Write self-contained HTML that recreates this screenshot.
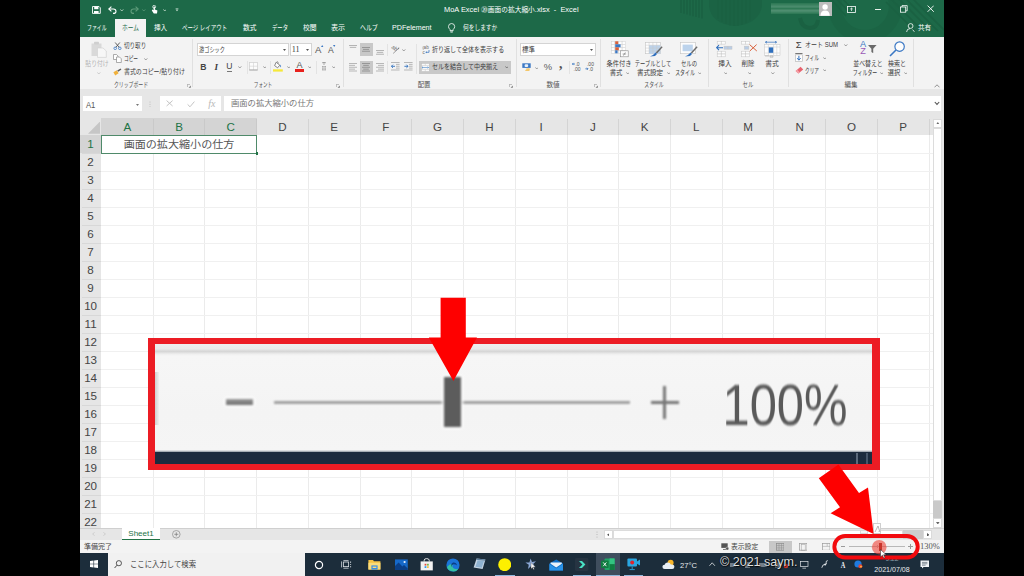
<!DOCTYPE html>
<html lang="ja"><head><meta charset="utf-8"><title>MoA Excel</title>
<style>
*{box-sizing:border-box;margin:0;padding:0}
html,body{width:1024px;height:576px;overflow:hidden;background:#000}
body{font-family:"Liberation Sans","Noto Sans CJK JP",sans-serif;position:relative}
#pg{position:absolute;left:0;top:0;width:1024px;height:576px;overflow:hidden;background:#fff}
.a{position:absolute;display:block}
.t{position:absolute;white-space:nowrap;line-height:1.2}
</style></head><body><div id="pg">
<div class="a" style="left:80.0px;top:0.0px;width:864.0px;height:37.0px;background:#1d6948;"></div>
<svg class="a" style="left:680.0px;top:0.0px;" width="264" height="37" viewBox="0 0 264 37"><g stroke="#1a6142" stroke-width="1.5"><path d="M1 0 V13.0"/><path d="M4 0 V13.8"/><path d="M7 0 V14.6"/><path d="M10 0 V15.4"/><path d="M13 0 V16.2"/><path d="M16 0 V17.0"/><path d="M19 0 V17.8"/><path d="M22 0 V18.6"/></g><path d="M29 0 V6 Q31 24 55 26 Q79 24 82 6 V0 Z" fill="#1b6344"/><g stroke="#1a6142" stroke-width="1.4"><path d="M38 0 V18.8"/><path d="M42 0 V21.8"/><path d="M46 0 V24.0"/><path d="M50 0 V25.4"/><path d="M54 0 V26.0"/><path d="M58 0 V25.8"/><path d="M62 0 V24.8"/><path d="M66 0 V23.0"/><path d="M70 0 V20.4"/></g><path d="M120 18 Q122 28 130 28 Q137 28 138 20" fill="none" stroke="#1a6142" stroke-width="4"/><circle cx="185" cy="6" r="30.4" fill="none" stroke="#1b6444" stroke-width="13"/><g stroke="#1a6142" stroke-width="1.5"><path d="M150 -2 L166 16 M155 -3 L170 13 M160 -4 L173 10"/></g><g stroke="#1a6142" stroke-width="1.6"><path d="M206 2 L236 32 M211 -1 L243 31 M217 -3 L251 31 M223 -4 L258 31 M230 -4 L264 30"/></g></svg>
<svg class="a" style="left:91.6px;top:5.6px;" width="9" height="8" viewBox="0 0 9 8"><path d="M0.5 0.5 H7 L8.3 1.8 V7.4 H0.5 Z" fill="none" stroke="#fff" stroke-width="0.9"/><rect x="2.2" y="0.6" width="4.2" height="2.6" fill="#fff"/><rect x="2" y="5" width="4.6" height="2.4" fill="#fff"/></svg>
<svg class="a" style="left:108.0px;top:5.8px;" width="9" height="8" viewBox="0 0 9 8"><path d="M1 3 H5.4 Q8 3 8 5.4 Q8 7.4 5 7.4" fill="none" stroke="#fff" stroke-width="1.1"/><path d="M3.4 0.6 L0.8 3 L3.4 5.4" fill="none" stroke="#fff" stroke-width="1.1"/></svg>
<svg class="a" style="left:120.2px;top:8.5px;" width="3.6" height="2.6" viewBox="0 0 3.6 2.6"><path d="M0.3 0.4 L1.8 2 L3.3 0.4" fill="none" stroke="#cfe3d6" stroke-width="0.8"/></svg>
<svg class="a" style="left:129.6px;top:5.8px;" width="9" height="8" viewBox="0 0 9 8"><path d="M8 3 H3.6 Q1 3 1 5.4 Q1 7.4 4 7.4" fill="none" stroke="#5f9c7b" stroke-width="1.1"/><path d="M5.6 0.6 L8.2 3 L5.6 5.4" fill="none" stroke="#5f9c7b" stroke-width="1.1"/></svg>
<svg class="a" style="left:142.4px;top:8.5px;" width="3.6" height="2.6" viewBox="0 0 3.6 2.6"><path d="M0.3 0.4 L1.8 2 L3.3 0.4" fill="none" stroke="#5f9c7b" stroke-width="0.8"/></svg>
<svg class="a" style="left:150.6px;top:5.0px;" width="7" height="9" viewBox="0 0 7 9"><circle cx="3.2" cy="1.8" r="1.5" fill="none" stroke="#fff" stroke-width="0.7"/><path d="M2.6 1.6 V5.2 L1.4 4.6 L0.8 5.4 L2.8 8.4 H6 L6.4 5.4 L3.9 4.4 V1.6 Z" fill="#fff"/></svg>
<svg class="a" style="left:162.5px;top:8.5px;" width="3.6" height="2.6" viewBox="0 0 3.6 2.6"><path d="M0.3 0.4 L1.8 2 L3.3 0.4" fill="none" stroke="#cfe3d6" stroke-width="0.8"/></svg>
<svg class="a" style="left:175.0px;top:8.4px;" width="4" height="4" viewBox="0 0 4 4"><path d="M0.6 0.4 H3.4" stroke="#cfe3d6" stroke-width="0.6"/><path d="M0.5 1.6 L2 3.2 L3.5 1.6 Z" fill="#cfe3d6"/></svg>
<div class="t" style="left:444.1px;top:10.4px;font-size:7.4px;color:#fff;transform-origin:0 50%;transform:translateY(-50%) scaleX(1.004);">MoA Excel <span style="font-size:6.7px">⑳画面の拡大縮小</span>.xlsx&nbsp; -&nbsp; Excel</div>
<div class="a" style="left:115.0px;top:19.4px;width:31.0px;height:18.6px;background:#f3f3f3;"></div>
<div class="t" style="left:87.4px;top:28.0px;font-size:7.4px;color:#fff;transform-origin:0 50%;transform:translateY(-50%) scaleX(0.663);">ファイル</div>
<div class="t" style="left:122.2px;top:28.0px;font-size:7.4px;color:#1d6948;transform-origin:0 50%;transform:translateY(-50%) scaleX(0.774);">ホーム</div>
<div class="t" style="left:154.0px;top:28.0px;font-size:7.4px;color:#fff;transform-origin:0 50%;transform:translateY(-50%) scaleX(0.892);">挿入</div>
<div class="t" style="left:182.4px;top:28.0px;font-size:7.4px;color:#fff;transform-origin:0 50%;transform:translateY(-50%) scaleX(0.741);">ページ レイアウト</div>
<div class="t" style="left:243.3px;top:28.0px;font-size:7.4px;color:#fff;transform-origin:0 50%;transform:translateY(-50%) scaleX(0.912);">数式</div>
<div class="t" style="left:272.0px;top:28.0px;font-size:7.4px;color:#fff;transform-origin:0 50%;transform:translateY(-50%) scaleX(0.721);">データ</div>
<div class="t" style="left:302.7px;top:28.0px;font-size:7.4px;color:#fff;transform-origin:0 50%;transform:translateY(-50%) scaleX(0.919);">校閲</div>
<div class="t" style="left:331.0px;top:28.0px;font-size:7.4px;color:#fff;transform-origin:0 50%;transform:translateY(-50%) scaleX(0.960);">表示</div>
<div class="t" style="left:359.7px;top:28.0px;font-size:7.4px;color:#fff;transform-origin:0 50%;transform:translateY(-50%) scaleX(0.802);">ヘルプ</div>
<div class="t" style="left:392.0px;top:28.0px;font-size:7.4px;color:#fff;transform-origin:0 50%;transform:translateY(-50%) scaleX(0.962);">PDFelement</div>
<svg class="a" style="left:448.4px;top:22.6px;" width="7.2" height="10.6" viewBox="0 0 7.2 10.6"><path d="M3.6 0.5 Q6.7 0.6 6.7 3.6 Q6.7 5.2 5.2 6.4 V7.6 H2 V6.4 Q0.5 5.2 0.5 3.6 Q0.5 0.6 3.6 0.5 Z" fill="none" stroke="#fff" stroke-width="0.8"/><path d="M2.2 8.8 H5 M2.6 10 H4.6" stroke="#fff" stroke-width="0.7"/></svg>
<div class="t" style="left:462.5px;top:28.0px;font-size:7.4px;color:#fff;transform-origin:0 50%;transform:translateY(-50%) scaleX(0.773);">何をしますか</div>
<svg class="a" style="left:906.0px;top:23.4px;" width="9" height="9.4" viewBox="0 0 9 9.4"><circle cx="4.6" cy="3" r="2.4" fill="none" stroke="#fff" stroke-width="0.8"/><path d="M0.6 9 Q0.8 5.6 4 5.6 M6.6 6.6 L8.4 8.8" fill="none" stroke="#fff" stroke-width="0.8"/></svg>
<div class="t" style="left:918.4px;top:28.0px;font-size:7.4px;color:#fff;transform-origin:0 50%;transform:translateY(-50%) scaleX(0.892);">共有</div>
<div class="a" style="left:770.6px;top:3.0px;width:49.4px;height:11.4px;background:linear-gradient(180deg,#3e8a61 0%,#8fbfa5 35%,#4b926b 50%,#9cc7b0 70%,#3e8a61 100%);filter:blur(0.6px);opacity:0.42"></div>
<div class="a" style="left:819.4px;top:2.0px;width:12.2px;height:13.8px;background:#bcbcbc;"></div>
<svg class="a" style="left:819.4px;top:2.0px;" width="12.2" height="13.8" viewBox="0 0 12.2 13.8"><circle cx="6.1" cy="5" r="2.7" fill="#fff"/><path d="M1.4 13.8 Q1.6 8.4 6.1 8.4 Q10.6 8.4 10.8 13.8 Z" fill="#fff"/></svg>
<svg class="a" style="left:846.6px;top:5.6px;" width="9" height="7" viewBox="0 0 9 7"><rect x="0.5" y="0.5" width="8" height="6" fill="none" stroke="#fff" stroke-width="0.8"/><path d="M4.5 2 V5 M3.2 3.2 L4.5 2 L5.8 3.2" stroke="#fff" stroke-width="0.7" fill="none"/></svg>
<div class="a" style="left:875.0px;top:8.7px;width:6.0px;height:0.7px;background:#e8f0ea;"></div>
<svg class="a" style="left:900.0px;top:5.2px;" width="8" height="8" viewBox="0 0 8 8"><rect x="0.5" y="2" width="5.2" height="5.2" fill="none" stroke="#fff" stroke-width="0.8"/><path d="M2 2 V0.6 H7.2 V5.8 H5.8" fill="none" stroke="#fff" stroke-width="0.8"/></svg>
<svg class="a" style="left:926.6px;top:5.4px;" width="7.4" height="7.4" viewBox="0 0 7.4 7.4"><path d="M0.6 0.6 L6.8 6.8 M6.8 0.6 L0.6 6.8" stroke="#fff" stroke-width="0.9"/></svg>
<div class="a" style="left:80.0px;top:37.0px;width:864.0px;height:52.0px;background:#f3f3f3;"></div>
<svg class="a" style="left:91.0px;top:41.0px;" width="16" height="17" viewBox="0 0 16 17"><rect x="0.5" y="2.5" width="10" height="12.5" fill="#d9d9d9"/><rect x="3" y="0.8" width="5" height="2.6" rx="0.8" fill="#cfcfcf"/><path d="M6.5 7 H12 L15.3 10 V16.4 H6.5 Z" fill="#f7f7f7" stroke="#d2d2d2" stroke-width="0.7"/></svg>
<div class="t" style="left:97.3px;top:64.3px;font-size:7px;color:#b4b4b4;transform:translate(-50%,-50%) scaleX(0.832);">貼り付け</div>
<svg class="a" style="left:97.0px;top:71.5px;" width="3.6" height="2.6" viewBox="0 0 3.6 2.6"><path d="M0.3 0.4 L1.8 2 L3.3 0.4" fill="none" stroke="#c0c0c0" stroke-width="0.8"/></svg>
<svg class="a" style="left:112.5px;top:41.5px;" width="9" height="8" viewBox="0 0 9 8"><path d="M2.2 0.5 L6.2 5.4 M6.8 0.5 L2.8 5.4" stroke="#555" stroke-width="0.9" fill="none"/><circle cx="2.2" cy="6.3" r="1.3" fill="none" stroke="#3b78c4" stroke-width="0.8"/><circle cx="6.8" cy="6.3" r="1.3" fill="none" stroke="#3b78c4" stroke-width="0.8"/></svg>
<div class="t" style="left:123.8px;top:45.6px;font-size:7px;color:#3c3c3c;transform-origin:0 50%;transform:translateY(-50%) scaleX(0.793);">切り取り</div>
<svg class="a" style="left:113.0px;top:54.0px;" width="9" height="9" viewBox="0 0 9 9"><path d="M0.5 0.5 H3.5 L5 2 V5.5 H0.5 Z" fill="#fff" stroke="#8a8a8a" stroke-width="0.7"/><path d="M3.5 3 H6.5 L8.3 4.8 V8.5 H3.5 Z" fill="#fff" stroke="#8a8a8a" stroke-width="0.7"/></svg>
<div class="t" style="left:123.8px;top:59.0px;font-size:7px;color:#3c3c3c;transform-origin:0 50%;transform:translateY(-50%) scaleX(0.667);">コピー</div>
<svg class="a" style="left:144.2px;top:57.7px;" width="3.6" height="2.6" viewBox="0 0 3.6 2.6"><path d="M0.3 0.4 L1.8 2 L3.3 0.4" fill="none" stroke="#858585" stroke-width="0.8"/></svg>
<svg class="a" style="left:113.0px;top:67.5px;" width="9" height="8" viewBox="0 0 9 8"><path d="M0.4 4.2 L3.8 2.2 L5.6 5.2 L2.2 7.4 Z" fill="#f0b13c"/><path d="M4.2 2.6 L7.6 0.4 L8.4 1.4 L5.2 3.8 Z" fill="#5a5a5a"/></svg>
<div class="t" style="left:123.8px;top:72.3px;font-size:7px;color:#3c3c3c;transform-origin:0 50%;transform:translateY(-50%) scaleX(0.846);">書式のコピー/貼り付け</div>
<div class="t" style="left:131.4px;top:85.0px;font-size:7px;color:#555;transform:translate(-50%,-50%) scaleX(0.698);">クリップボード</div>
<svg class="a" style="left:186.5px;top:83.5px;" width="4" height="4" viewBox="0 0 4 4"><path d="M0.3 3 V0.3 H3" fill="none" stroke="#888" stroke-width="0.6"/><path d="M1.6 3.8 H3.8 V1.6 Z" fill="#777"/></svg>
<div class="a" style="left:192.4px;top:39.0px;width:1.0px;height:48.0px;background:#e0e0e0;"></div>
<div class="a" style="left:197.4px;top:43.0px;width:91.4px;height:13.3px;background:#fff;border:1px solid #d4d4d4;"></div>
<div class="t" style="left:199.0px;top:49.8px;font-size:7px;color:#3c3c3c;transform-origin:0 50%;transform:translateY(-50%) scaleX(0.743);">游ゴシック</div>
<svg class="a" style="left:283.1px;top:48.8px;" width="3" height="2" viewBox="0 0 3 2"><path d="M0 0 L3 0 L1.5 2 Z" fill="#555"/></svg>
<div class="a" style="left:290.0px;top:43.0px;width:21.5px;height:13.3px;background:#fff;border:1px solid #d4d4d4;"></div>
<div class="t" style="left:291.8px;top:49.8px;font-size:8.2px;color:#3c3c3c;transform-origin:0 50%;transform:translateY(-50%);font-family:'Liberation Serif',serif;">11</div>
<svg class="a" style="left:306.3px;top:48.8px;" width="3" height="2" viewBox="0 0 3 2"><path d="M0 0 L3 0 L1.5 2 Z" fill="#555"/></svg>
<div class="t" style="left:318.2px;top:50.0px;font-size:9.6px;color:#555;transform:translate(-50%,-50%);">A</div>
<svg class="a" style="left:321.4px;top:44.6px;" width="2.4" height="2" viewBox="0 0 3 2.4"><path d="M0 2.4 L1.5 0 L3 2.4 Z" fill="#3b78c4"/></svg>
<div class="t" style="left:330.8px;top:50.4px;font-size:8.6px;color:#555;transform:translate(-50%,-50%);">A</div>
<svg class="a" style="left:333.4px;top:44.6px;" width="2.4" height="2" viewBox="0 0 3 2.4"><path d="M0 0 L1.5 2.4 L3 0 Z" fill="#3b78c4"/></svg>
<div class="t" style="left:203.3px;top:66.6px;font-size:8.6px;color:#444;transform:translate(-50%,-50%);font-weight:bold;">B</div>
<div class="t" style="left:216.3px;top:66.6px;font-size:9px;color:#3c3c3c;transform:translate(-50%,-50%);font-style:italic;font-weight:bold;font-family:'Liberation Serif',serif;">I</div>
<div class="t" style="left:229.4px;top:66.3px;font-size:8.6px;color:#444;transform:translate(-50%,-50%);">U</div>
<div class="a" style="left:226.8px;top:70.5px;width:5.2px;height:0.6px;background:#777;"></div>
<svg class="a" style="left:238.2px;top:66.2px;" width="3.6" height="2.6" viewBox="0 0 3.6 2.6"><path d="M0.3 0.4 L1.8 2 L3.3 0.4" fill="none" stroke="#858585" stroke-width="0.8"/></svg>
<div class="a" style="left:246.5px;top:61.0px;width:1.0px;height:13.0px;background:#e3e3e3;"></div>
<svg class="a" style="left:249.4px;top:62.4px;" width="9" height="8.4" viewBox="0 0 9 8.4"><rect x="0.4" y="0.4" width="8.2" height="7.6" fill="#fcfcfc" stroke="#cfcfcf" stroke-width="0.7"/><path d="M4.5 0.4 V8 M0.4 4.2 H8.6" stroke="#d2d2d2" stroke-width="0.6"/><path d="M0.4 8 H8.6" stroke="#9a9a9a" stroke-width="0.8"/></svg>
<svg class="a" style="left:262.5px;top:66.2px;" width="3.6" height="2.6" viewBox="0 0 3.6 2.6"><path d="M0.3 0.4 L1.8 2 L3.3 0.4" fill="none" stroke="#858585" stroke-width="0.8"/></svg>
<div class="a" style="left:270.2px;top:61.0px;width:1.0px;height:13.0px;background:#e3e3e3;"></div>
<svg class="a" style="left:273.0px;top:61.0px;" width="10" height="11" viewBox="0 0 10 11"><path d="M3.2 1.2 L6.8 4.2 L4.6 6.8 L1.6 4.6 Z" fill="#fdfdfd" stroke="#6a6a6a" stroke-width="0.8"/><path d="M7.2 3.6 Q8.8 5.2 7.8 6.6 Q6.8 5.4 7.2 3.6 Z" fill="#3b78c4"/><path d="M3.8 0.3 Q5.6 0.6 5.2 2.6" fill="none" stroke="#6a6a6a" stroke-width="0.6"/><rect x="0" y="8.3" width="9.8" height="2.3" fill="#f5e83a"/></svg>
<svg class="a" style="left:286.6px;top:66.2px;" width="3.6" height="2.6" viewBox="0 0 3.6 2.6"><path d="M0.3 0.4 L1.8 2 L3.3 0.4" fill="none" stroke="#858585" stroke-width="0.8"/></svg>
<div class="t" style="left:299.4px;top:65.4px;font-size:9px;color:#555;transform:translate(-50%,-50%);">A</div>
<div class="a" style="left:294.7px;top:69.3px;width:9.3px;height:2.3px;background:#e8211d;"></div>
<svg class="a" style="left:307.8px;top:66.2px;" width="3.6" height="2.6" viewBox="0 0 3.6 2.6"><path d="M0.3 0.4 L1.8 2 L3.3 0.4" fill="none" stroke="#858585" stroke-width="0.8"/></svg>
<div class="a" style="left:316.0px;top:61.0px;width:1.0px;height:13.0px;background:#e3e3e3;"></div>
<svg class="a" style="left:320.8px;top:62.0px;" width="6" height="9" viewBox="0 0 6 9"><path d="M1 0.8 L3 0.4 L5 0.8 M3 0.4 V3" stroke="#777" stroke-width="0.6" fill="none"/><rect x="1" y="4" width="4" height="4.4" fill="#a8a8a8"/><path d="M1 5.4 H5 M1 6.9 H5 M3 4 V8.4" stroke="#f3f3f3" stroke-width="0.5"/></svg>
<svg class="a" style="left:331.8px;top:66.2px;" width="3.6" height="2.6" viewBox="0 0 3.6 2.6"><path d="M0.3 0.4 L1.8 2 L3.3 0.4" fill="none" stroke="#858585" stroke-width="0.8"/></svg>
<div class="t" style="left:262.6px;top:85.0px;font-size:7px;color:#555;transform:translate(-50%,-50%) scaleX(0.657);">フォント</div>
<svg class="a" style="left:336.2px;top:83.5px;" width="4" height="4" viewBox="0 0 4 4"><path d="M0.3 3 V0.3 H3" fill="none" stroke="#888" stroke-width="0.6"/><path d="M1.6 3.8 H3.8 V1.6 Z" fill="#777"/></svg>
<div class="a" style="left:342.5px;top:39.0px;width:1.0px;height:48.0px;background:#e0e0e0;"></div>
<div class="a" style="left:360.0px;top:43.0px;width:13.0px;height:13.3px;background:#c8c8c8;"></div>
<div class="a" style="left:360.0px;top:60.8px;width:13.0px;height:13.0px;background:#c8c8c8;"></div>
<svg class="a" style="left:349.3px;top:44.9px;" width="8" height="3.8" viewBox="0 0 8 3.8"><rect x="0.00" y="0.00" width="8" height="0.8" fill="#a4a4a4"/><rect x="0.80" y="1.90" width="6.4" height="0.8" fill="#a4a4a4"/></svg>
<svg class="a" style="left:362.4px;top:47.4px;" width="8" height="5.699999999999999" viewBox="0 0 8 5.699999999999999"><rect x="0.00" y="0.00" width="8" height="0.8" fill="#8a8a8a"/><rect x="0.90" y="1.90" width="6.2" height="0.8" fill="#8a8a8a"/><rect x="0.00" y="3.80" width="8" height="0.8" fill="#8a8a8a"/></svg>
<svg class="a" style="left:375.6px;top:49.6px;" width="8" height="5.699999999999999" viewBox="0 0 8 5.699999999999999"><rect x="0.00" y="0.00" width="8" height="0.8" fill="#a4a4a4"/><rect x="0.80" y="1.90" width="6.4" height="0.8" fill="#a4a4a4"/><rect x="0.00" y="3.80" width="8" height="0.8" fill="#a4a4a4"/></svg>
<svg class="a" style="left:349.3px;top:62.6px;" width="8" height="9.5" viewBox="0 0 8 9.5"><rect x="0.00" y="0.00" width="8" height="0.8" fill="#a8a8a8"/><rect x="0.00" y="1.90" width="6" height="0.8" fill="#a8a8a8"/><rect x="0.00" y="3.80" width="8" height="0.8" fill="#a8a8a8"/><rect x="0.00" y="5.70" width="6" height="0.8" fill="#a8a8a8"/><rect x="0.00" y="7.60" width="8" height="0.8" fill="#a8a8a8"/></svg>
<svg class="a" style="left:362.4px;top:62.6px;" width="8" height="9.5" viewBox="0 0 8 9.5"><rect x="0.00" y="0.00" width="8" height="0.8" fill="#8a8a8a"/><rect x="1.20" y="1.90" width="5.6" height="0.8" fill="#8a8a8a"/><rect x="0.00" y="3.80" width="8" height="0.8" fill="#8a8a8a"/><rect x="1.20" y="5.70" width="5.6" height="0.8" fill="#8a8a8a"/><rect x="0.00" y="7.60" width="8" height="0.8" fill="#8a8a8a"/></svg>
<svg class="a" style="left:375.6px;top:62.6px;" width="8" height="9.5" viewBox="0 0 8 9.5"><rect x="0.00" y="0.00" width="8" height="0.8" fill="#a8a8a8"/><rect x="2.00" y="1.90" width="6" height="0.8" fill="#a8a8a8"/><rect x="0.00" y="3.80" width="8" height="0.8" fill="#a8a8a8"/><rect x="2.00" y="5.70" width="6" height="0.8" fill="#a8a8a8"/><rect x="0.00" y="7.60" width="8" height="0.8" fill="#a8a8a8"/></svg>
<div class="a" style="left:387.3px;top:44.0px;width:1.0px;height:12.0px;background:#e3e3e3;"></div>
<div class="a" style="left:387.3px;top:61.0px;width:1.0px;height:13.0px;background:#e3e3e3;"></div>
<svg class="a" style="left:391.0px;top:45.0px;" width="9" height="9" viewBox="0 0 9 9"><text x="0" y="5.4" font-size="5.5" fill="#666" transform="rotate(38 4 4)" font-family="Liberation Sans,sans-serif">ab</text><path d="M2.2 8.4 L7.6 3.4" stroke="#777" stroke-width="0.7"/><path d="M8.3 2.6 L7.9 4.4 L6.6 3.1 Z" fill="#777"/></svg>
<svg class="a" style="left:402.2px;top:48.7px;" width="3.6" height="2.6" viewBox="0 0 3.6 2.6"><path d="M0.3 0.4 L1.8 2 L3.3 0.4" fill="none" stroke="#858585" stroke-width="0.8"/></svg>
<svg class="a" style="left:390.8px;top:62.4px;" width="9" height="8.6" viewBox="0 0 9 8.6"><rect x="0" y="0" width="8.6" height="0.8" fill="#a8a8a8"/><rect x="5" y="1.9" width="3.6" height="0.8" fill="#a8a8a8"/><rect x="5" y="3.8" width="3.6" height="0.8" fill="#a8a8a8"/><rect x="5" y="5.7" width="3.6" height="0.8" fill="#a8a8a8"/><rect x="0" y="7.6" width="8.6" height="0.8" fill="#a8a8a8"/><path d="M4 4.3 H0.4 M2 2.7 L0.4 4.3 L2 5.9" stroke="#2f6fbd" stroke-width="0.9" fill="none"/></svg>
<svg class="a" style="left:403.8px;top:62.4px;" width="9" height="8.6" viewBox="0 0 9 8.6"><rect x="0" y="0" width="8.6" height="0.8" fill="#a8a8a8"/><rect x="5" y="1.9" width="3.6" height="0.8" fill="#a8a8a8"/><rect x="5" y="3.8" width="3.6" height="0.8" fill="#a8a8a8"/><rect x="5" y="5.7" width="3.6" height="0.8" fill="#a8a8a8"/><rect x="0" y="7.6" width="8.6" height="0.8" fill="#a8a8a8"/><path d="M0.4 4.3 H4 M2.4 2.7 L4 4.3 L2.4 5.9" stroke="#2f6fbd" stroke-width="0.9" fill="none"/></svg>
<div class="a" style="left:416.2px;top:44.0px;width:1.0px;height:30.0px;background:#e3e3e3;"></div>
<svg class="a" style="left:421.8px;top:45.0px;" width="8" height="9.5" viewBox="0 0 8 9.5"><text x="1.6" y="3.8" font-size="4.6" fill="#666" font-family="Liberation Sans,sans-serif">ab</text><path d="M1.4 1 Q0.2 3 1.4 5" stroke="#888" stroke-width="0.5" fill="none"/><text x="0.6" y="8.6" font-size="4.6" fill="#666" font-family="Liberation Sans,sans-serif">c</text><path d="M7 5 V7.3 H4" stroke="#2f6fbd" stroke-width="0.7" fill="none"/><path d="M4.6 6.3 L3.4 7.3 L4.6 8.3 Z" fill="#2f6fbd"/></svg>
<div class="t" style="left:431.8px;top:49.9px;font-size:7.2px;color:#3c3c3c;transform-origin:0 50%;transform:translateY(-50%) scaleX(0.839);">折り返して全体を表示する</div>
<div class="a" style="left:419.0px;top:60.8px;width:92.3px;height:13.0px;background:#c8c8c8;"></div>
<svg class="a" style="left:421.0px;top:62.8px;" width="8.6" height="9" viewBox="0 0 8.6 9"><rect x="0.3" y="0.3" width="8" height="8.4" fill="#fafafa" stroke="#bdbdbd" stroke-width="0.6"/><path d="M0.3 2.6 H8.3 M0.3 6.4 H8.3 M4.3 0.3 V2.6 M4.3 6.4 V8.7" stroke="#c4c4c4" stroke-width="0.5"/><path d="M1 4.5 H7.6 M2 3.6 L1 4.5 L2 5.4 M6.6 3.6 L7.6 4.5 L6.6 5.4" stroke="#4a86c8" stroke-width="0.6" fill="none"/></svg>
<div class="t" style="left:431.8px;top:67.4px;font-size:7.2px;color:#3c3c3c;transform-origin:0 50%;transform:translateY(-50%) scaleX(0.839);">セルを結合して中央揃え</div>
<svg class="a" style="left:504.7px;top:66.3px;" width="3.6" height="2.6" viewBox="0 0 3.6 2.6"><path d="M0.3 0.4 L1.8 2 L3.3 0.4" fill="none" stroke="#666" stroke-width="0.8"/></svg>
<div class="t" style="left:424.2px;top:85.0px;font-size:7px;color:#555;transform:translate(-50%,-50%) scaleX(0.907);">配置</div>
<svg class="a" style="left:509.3px;top:83.5px;" width="4" height="4" viewBox="0 0 4 4"><path d="M0.3 3 V0.3 H3" fill="none" stroke="#888" stroke-width="0.6"/><path d="M1.6 3.8 H3.8 V1.6 Z" fill="#777"/></svg>
<div class="a" style="left:515.6px;top:39.0px;width:1.0px;height:48.0px;background:#e0e0e0;"></div>
<div class="a" style="left:520.4px;top:43.0px;width:75.3px;height:13.3px;background:#fff;border:1px solid #d4d4d4;"></div>
<div class="t" style="left:522.2px;top:49.8px;font-size:7px;color:#3c3c3c;transform-origin:0 50%;transform:translateY(-50%) scaleX(0.914);">標準</div>
<svg class="a" style="left:589.8px;top:48.8px;" width="3" height="2" viewBox="0 0 3 2"><path d="M0 0 L3 0 L1.5 2 Z" fill="#555"/></svg>
<svg class="a" style="left:521.7px;top:62.6px;" width="10" height="8.6" viewBox="0 0 10 8.6"><rect x="0.3" y="0.3" width="8.4" height="4.6" fill="#3b78c4"/><rect x="2.6" y="1.3" width="3.6" height="2.6" rx="1" fill="#e8f0fa"/><ellipse cx="6" cy="6.1" rx="2.2" ry="0.9" fill="#f4c76a"/><ellipse cx="5.4" cy="7.5" rx="2.2" ry="0.9" fill="#f4c76a"/></svg>
<svg class="a" style="left:534.9px;top:66.5px;" width="3.6" height="2.6" viewBox="0 0 3.6 2.6"><path d="M0.3 0.4 L1.8 2 L3.3 0.4" fill="none" stroke="#858585" stroke-width="0.8"/></svg>
<div class="t" style="left:547.9px;top:67.2px;font-size:9.4px;color:#5a5a5a;transform:translate(-50%,-50%);">%</div>
<div class="t" style="left:560.8px;top:64.4px;font-size:14px;color:#555;transform:translate(-50%,-50%);font-weight:bold;font-family:'Liberation Serif',serif;">,</div>
<div class="a" style="left:568.7px;top:61.0px;width:1.0px;height:13.0px;background:#e3e3e3;"></div>
<svg class="a" style="left:572.0px;top:62.2px;" width="9.4" height="9" viewBox="0 0 9.4 9"><path d="M3 2 H0.4 M1.5 0.9 L0.4 2 L1.5 3.1" stroke="#2f6fbd" stroke-width="0.8" fill="none"/><text x="3.4" y="3.8" font-size="5" fill="#555" font-family="Liberation Sans,sans-serif">.0</text><text x="1.6" y="8.6" font-size="5" fill="#555" font-family="Liberation Sans,sans-serif">.00</text></svg>
<svg class="a" style="left:585.3px;top:62.2px;" width="9.4" height="9" viewBox="0 0 9.4 9"><text x="2" y="3.8" font-size="5" fill="#555" font-family="Liberation Sans,sans-serif">.00</text><path d="M0.4 6.8 H3 M1.9 5.7 L3 6.8 L1.9 7.9" stroke="#2f6fbd" stroke-width="0.8" fill="none"/><text x="4" y="8.6" font-size="5" fill="#555" font-family="Liberation Sans,sans-serif">.0</text></svg>
<div class="t" style="left:553.2px;top:85.0px;font-size:7px;color:#555;transform:translate(-50%,-50%) scaleX(0.943);">数値</div>
<svg class="a" style="left:594.0px;top:83.5px;" width="4" height="4" viewBox="0 0 4 4"><path d="M0.3 3 V0.3 H3" fill="none" stroke="#888" stroke-width="0.6"/><path d="M1.6 3.8 H3.8 V1.6 Z" fill="#777"/></svg>
<div class="a" style="left:600.4px;top:39.0px;width:1.0px;height:48.0px;background:#e0e0e0;"></div>
<svg class="a" style="left:611.2px;top:41.0px;" width="18" height="16.5" viewBox="0 0 18 16.5"><rect x="0.3" y="0.3" width="3.6" height="3" fill="#fdfdfd" stroke="#cfcfcf" stroke-width="0.5"/><rect x="3.9" y="0.3" width="3.6" height="3" fill="#fdfdfd" stroke="#cfcfcf" stroke-width="0.5"/><rect x="7.5" y="0.3" width="3.6" height="3" fill="#fdfdfd" stroke="#cfcfcf" stroke-width="0.5"/><rect x="11.1" y="0.3" width="3.6" height="3" fill="#fdfdfd" stroke="#cfcfcf" stroke-width="0.5"/><rect x="0.3" y="3.3" width="3.6" height="3" fill="#fdfdfd" stroke="#cfcfcf" stroke-width="0.5"/><rect x="3.9" y="3.3" width="3.6" height="3" fill="#fdfdfd" stroke="#cfcfcf" stroke-width="0.5"/><rect x="7.5" y="3.3" width="3.6" height="3" fill="#fdfdfd" stroke="#cfcfcf" stroke-width="0.5"/><rect x="11.1" y="3.3" width="3.6" height="3" fill="#fdfdfd" stroke="#cfcfcf" stroke-width="0.5"/><rect x="0.3" y="6.3" width="3.6" height="3" fill="#fdfdfd" stroke="#cfcfcf" stroke-width="0.5"/><rect x="3.9" y="6.3" width="3.6" height="3" fill="#fdfdfd" stroke="#cfcfcf" stroke-width="0.5"/><rect x="7.5" y="6.3" width="3.6" height="3" fill="#fdfdfd" stroke="#cfcfcf" stroke-width="0.5"/><rect x="11.1" y="6.3" width="3.6" height="3" fill="#fdfdfd" stroke="#cfcfcf" stroke-width="0.5"/><rect x="0.3" y="9.3" width="3.6" height="3" fill="#fdfdfd" stroke="#cfcfcf" stroke-width="0.5"/><rect x="3.9" y="9.3" width="3.6" height="3" fill="#fdfdfd" stroke="#cfcfcf" stroke-width="0.5"/><rect x="7.5" y="9.3" width="3.6" height="3" fill="#fdfdfd" stroke="#cfcfcf" stroke-width="0.5"/><rect x="11.1" y="9.3" width="3.6" height="3" fill="#fdfdfd" stroke="#cfcfcf" stroke-width="0.5"/><rect x="4.2" y="0.3" width="3" height="3" fill="#d9603a"/><rect x="4.2" y="3.3" width="5.4" height="3" fill="#3b78c4"/><rect x="4.2" y="6.3" width="3.6" height="3" fill="#d9603a"/><rect x="4.2" y="9.3" width="2.4" height="3" fill="#3b78c4"/><rect x="9.6" y="9.8" width="7.6" height="6" fill="#fdfdfd" stroke="#8a8a8a" stroke-width="0.6"/><path d="M11.6 13 H15.2 M14.4 11.4 L12.4 14.6" stroke="#555" stroke-width="0.5"/></svg>
<div class="t" style="left:618.6px;top:64.2px;font-size:7.2px;color:#3c3c3c;transform:translate(-50%,-50%) scaleX(0.869);">条件付き</div>
<div class="t" style="left:616.0px;top:72.8px;font-size:7.2px;color:#3c3c3c;transform:translate(-50%,-50%) scaleX(0.883);">書式</div>
<svg class="a" style="left:625.6px;top:71.7px;" width="3.6" height="2.6" viewBox="0 0 3.6 2.6"><path d="M0.3 0.4 L1.8 2 L3.3 0.4" fill="none" stroke="#858585" stroke-width="0.8"/></svg>
<svg class="a" style="left:645.4px;top:42.0px;" width="18" height="16" viewBox="0 0 18 16"><rect x="0.3" y="0.3" width="15" height="11.4" fill="#fdfdfd" stroke="#c4c4c4" stroke-width="0.6"/><rect x="4" y="3.2" width="11.3" height="8.5" fill="#bcd3ec"/><path d="M0.3 3.2 H15.3" stroke="#c9c9c9" stroke-width="0.5"/><path d="M0.3 6.1 H15.3" stroke="#c9c9c9" stroke-width="0.5"/><path d="M0.3 9.0 H15.3" stroke="#c9c9c9" stroke-width="0.5"/><path d="M4.1 0.3 V11.7" stroke="#c9c9c9" stroke-width="0.5"/><path d="M7.9 0.3 V11.7" stroke="#c9c9c9" stroke-width="0.5"/><path d="M11.7 0.3 V11.7" stroke="#c9c9c9" stroke-width="0.5"/><path d="M16.6 4.2 L17.6 5.2 L12 11.6 L10.8 10.4 Z" fill="#6a6a6a"/><path d="M10.6 10.6 L12 12 L10 14 L5 14.6 Q8.6 13.2 10.6 10.6 Z" fill="#2f6fbd"/></svg>
<div class="t" style="left:653.1px;top:64.2px;font-size:7.2px;color:#3c3c3c;transform:translate(-50%,-50%) scaleX(0.731);">テーブルとして</div>
<div class="t" style="left:649.8px;top:72.8px;font-size:7.2px;color:#3c3c3c;transform:translate(-50%,-50%) scaleX(0.904);">書式設定</div>
<svg class="a" style="left:666.7px;top:71.7px;" width="3.6" height="2.6" viewBox="0 0 3.6 2.6"><path d="M0.3 0.4 L1.8 2 L3.3 0.4" fill="none" stroke="#858585" stroke-width="0.8"/></svg>
<svg class="a" style="left:679.7px;top:42.0px;" width="18" height="16" viewBox="0 0 18 16"><rect x="0.3" y="0.3" width="15" height="11.4" fill="#fdfdfd" stroke="#c4c4c4" stroke-width="0.6"/><rect x="2.6" y="2.6" width="10.2" height="6.6" fill="#bcd3ec"/><path d="M16.6 4.2 L17.6 5.2 L12 11.6 L10.8 10.4 Z" fill="#6a6a6a"/><path d="M10.6 10.6 L12 12 L10 14 L5 14.6 Q8.6 13.2 10.6 10.6 Z" fill="#2f6fbd"/></svg>
<div class="t" style="left:688.7px;top:64.2px;font-size:7.2px;color:#3c3c3c;transform:translate(-50%,-50%) scaleX(0.746);">セルの</div>
<div class="t" style="left:684.8px;top:72.8px;font-size:7.2px;color:#3c3c3c;transform:translate(-50%,-50%) scaleX(0.681);">スタイル</div>
<svg class="a" style="left:697.8px;top:71.7px;" width="3.6" height="2.6" viewBox="0 0 3.6 2.6"><path d="M0.3 0.4 L1.8 2 L3.3 0.4" fill="none" stroke="#858585" stroke-width="0.8"/></svg>
<div class="t" style="left:653.5px;top:85.0px;font-size:7px;color:#555;transform:translate(-50%,-50%) scaleX(0.693);">スタイル</div>
<div class="a" style="left:708.3px;top:39.0px;width:1.0px;height:48.0px;background:#e0e0e0;"></div>
<svg class="a" style="left:716.2px;top:41.0px;" width="17" height="17" viewBox="0 0 17 17"><rect x="1.2" y="0.3" width="4" height="2.8" fill="#fdfdfd" stroke="#c4c4c4" stroke-width="0.5"/><rect x="5.2" y="0.3" width="4" height="2.8" fill="#fdfdfd" stroke="#c4c4c4" stroke-width="0.5"/><rect x="1.2" y="10.2" width="4" height="2.8" fill="#fdfdfd" stroke="#c4c4c4" stroke-width="0.5"/><rect x="5.2" y="10.2" width="4" height="2.8" fill="#fdfdfd" stroke="#c4c4c4" stroke-width="0.5"/><rect x="1.2" y="13" width="4" height="2.8" fill="#fdfdfd" stroke="#c4c4c4" stroke-width="0.5"/><rect x="5.2" y="13" width="4" height="2.8" fill="#fdfdfd" stroke="#c4c4c4" stroke-width="0.5"/><rect x="8" y="5.2" width="4" height="3" fill="#b9cde6" stroke="#c4c4c4" stroke-width="0.5"/><rect x="12" y="5.2" width="4" height="3" fill="#b9cde6" stroke="#c4c4c4" stroke-width="0.5"/><path d="M7 6.7 H0.6 M3 4.2 L0.6 6.7 L3 9.2" stroke="#2f6fbd" stroke-width="1.1" fill="none"/></svg>
<div class="t" style="left:724.5px;top:64.2px;font-size:7.2px;color:#3c3c3c;transform:translate(-50%,-50%) scaleX(0.924);">挿入</div>
<svg class="a" style="left:723.6px;top:71.7px;" width="3.6" height="2.6" viewBox="0 0 3.6 2.6"><path d="M0.3 0.4 L1.8 2 L3.3 0.4" fill="none" stroke="#858585" stroke-width="0.8"/></svg>
<svg class="a" style="left:740.6px;top:41.0px;" width="17" height="17" viewBox="0 0 17 17"><rect x="0.3" y="0.3" width="4" height="2.8" fill="#fdfdfd" stroke="#c4c4c4" stroke-width="0.5"/><rect x="4.3" y="0.3" width="4" height="2.8" fill="#fdfdfd" stroke="#c4c4c4" stroke-width="0.5"/><rect x="0.3" y="10.2" width="4" height="2.8" fill="#fdfdfd" stroke="#c4c4c4" stroke-width="0.5"/><rect x="4.3" y="10.2" width="4" height="2.8" fill="#fdfdfd" stroke="#c4c4c4" stroke-width="0.5"/><rect x="0.3" y="13" width="4" height="2.8" fill="#fdfdfd" stroke="#c4c4c4" stroke-width="0.5"/><rect x="4.3" y="13" width="4" height="2.8" fill="#fdfdfd" stroke="#c4c4c4" stroke-width="0.5"/><rect x="3.4" y="5.2" width="4.4" height="3" fill="#b9cde6" stroke="#c4c4c4" stroke-width="0.5"/><path d="M8.6 3.6 L15.8 10 M15.6 3.6 L8.8 10" stroke="#d9603a" stroke-width="1" fill="none"/></svg>
<div class="t" style="left:748.3px;top:64.2px;font-size:7.2px;color:#3c3c3c;transform:translate(-50%,-50%) scaleX(0.896);">削除</div>
<svg class="a" style="left:747.5px;top:71.7px;" width="3.6" height="2.6" viewBox="0 0 3.6 2.6"><path d="M0.3 0.4 L1.8 2 L3.3 0.4" fill="none" stroke="#858585" stroke-width="0.8"/></svg>
<svg class="a" style="left:763.5px;top:41.0px;" width="17" height="17" viewBox="0 0 17 17"><path d="M1.4 1.2 H12.6 M3 0.2 L1.4 1.2 L3 2.2 M11 0.2 L12.6 1.2 L11 2.2" stroke="#2f6fbd" stroke-width="0.7" fill="none"/><rect x="0.6" y="3.4" width="15.4" height="11" fill="#fdfdfd" stroke="#c4c4c4" stroke-width="0.5"/><path d="M4.4 3.4 V14.4 M9.6 3.4 V14.4 M12.8 3.4 V14.4 M0.6 6 H16 M0.6 12 H16" stroke="#c9c9c9" stroke-width="0.5"/><rect x="4.8" y="6.4" width="4.4" height="5.4" fill="#2f6fbd"/><path d="M1 15 H5 M6 15 H9 V16.2 H6 Z" stroke="#999" stroke-width="0.5" fill="none"/></svg>
<div class="t" style="left:772.2px;top:64.2px;font-size:7.2px;color:#3c3c3c;transform:translate(-50%,-50%) scaleX(0.945);">書式</div>
<svg class="a" style="left:771.2px;top:71.7px;" width="3.6" height="2.6" viewBox="0 0 3.6 2.6"><path d="M0.3 0.4 L1.8 2 L3.3 0.4" fill="none" stroke="#858585" stroke-width="0.8"/></svg>
<div class="t" style="left:747.9px;top:85.0px;font-size:7px;color:#555;transform:translate(-50%,-50%) scaleX(0.771);">セル</div>
<div class="a" style="left:788.2px;top:39.0px;width:1.0px;height:48.0px;background:#e0e0e0;"></div>
<div class="t" style="left:795.8px;top:45.3px;font-size:9.6px;color:#3c3c3c;transform-origin:0 50%;transform:translateY(-50%);">Σ</div>
<div class="t" style="left:805.4px;top:45.2px;font-size:7.2px;color:#3c3c3c;transform-origin:0 50%;transform:translateY(-50%) scaleX(0.837);">オート SUM</div>
<svg class="a" style="left:844.3px;top:43.9px;" width="3.6" height="2.6" viewBox="0 0 3.6 2.6"><path d="M0.3 0.4 L1.8 2 L3.3 0.4" fill="none" stroke="#858585" stroke-width="0.8"/></svg>
<svg class="a" style="left:795.2px;top:52.5px;" width="8" height="9" viewBox="0 0 8 9"><path d="M0.3 0.5 H7.5" stroke="#555" stroke-width="0.8"/><rect x="0.4" y="1.8" width="7" height="6.8" fill="#fdfdfd" stroke="#b0b0b0" stroke-width="0.6"/><path d="M3.9 2.8 V7 M2.2 5.2 L3.9 7.2 L5.6 5.2" stroke="#2f6fbd" stroke-width="1" fill="none"/></svg>
<div class="t" style="left:805.4px;top:58.4px;font-size:7.2px;color:#3c3c3c;transform-origin:0 50%;transform:translateY(-50%) scaleX(0.649);">フィル</div>
<svg class="a" style="left:822.6px;top:57.1px;" width="3.6" height="2.6" viewBox="0 0 3.6 2.6"><path d="M0.3 0.4 L1.8 2 L3.3 0.4" fill="none" stroke="#858585" stroke-width="0.8"/></svg>
<svg class="a" style="left:795.0px;top:66.4px;" width="9" height="8" viewBox="0 0 9 8"><path d="M0.6 5 L5.6 0.8 L8.2 3.6 L3.4 7.6 Z" fill="#e8636f"/><path d="M0.6 5 L2.2 3.7 L4.9 6.4 L3.4 7.6 Z" fill="#f4a4ab"/></svg>
<div class="t" style="left:805.4px;top:70.6px;font-size:7.2px;color:#3c3c3c;transform-origin:0 50%;transform:translateY(-50%) scaleX(0.644);">クリア</div>
<svg class="a" style="left:822.6px;top:69.3px;" width="3.6" height="2.6" viewBox="0 0 3.6 2.6"><path d="M0.3 0.4 L1.8 2 L3.3 0.4" fill="none" stroke="#858585" stroke-width="0.8"/></svg>
<div class="t" style="left:860.0px;top:44.6px;font-size:9.2px;color:#3b78c4;transform-origin:0 50%;transform:translateY(-50%);">A</div>
<div class="t" style="left:860.2px;top:52.4px;font-size:9.2px;color:#9b59b6;transform-origin:0 50%;transform:translateY(-50%);">Z</div>
<svg class="a" style="left:867.7px;top:44.9px;" width="9" height="8.4" viewBox="0 0 9 8.4"><path d="M0 0 H8.6 L5.2 3.8 V8.2 L3.4 7 V3.8 Z" fill="#6a6a6a"/></svg>
<div class="t" style="left:868.3px;top:64.2px;font-size:7.2px;color:#3c3c3c;transform:translate(-50%,-50%) scaleX(0.815);">並べ替えと</div>
<div class="t" style="left:864.8px;top:72.8px;font-size:7.2px;color:#3c3c3c;transform:translate(-50%,-50%) scaleX(0.684);">フィルター</div>
<svg class="a" style="left:879.5px;top:71.7px;" width="3.6" height="2.6" viewBox="0 0 3.6 2.6"><path d="M0.3 0.4 L1.8 2 L3.3 0.4" fill="none" stroke="#858585" stroke-width="0.8"/></svg>
<svg class="a" style="left:889.0px;top:41.0px;" width="17" height="16" viewBox="0 0 17 16"><circle cx="10.6" cy="5.6" r="4.7" fill="#fdfdfd" stroke="#3b78c4" stroke-width="1.2"/><path d="M7 9 L1 15" stroke="#3b78c4" stroke-width="1.6"/></svg>
<div class="t" style="left:897.0px;top:64.2px;font-size:7.2px;color:#3c3c3c;transform:translate(-50%,-50%) scaleX(0.834);">検索と</div>
<div class="t" style="left:893.6px;top:72.8px;font-size:7.2px;color:#3c3c3c;transform:translate(-50%,-50%) scaleX(0.862);">選択</div>
<svg class="a" style="left:903.6px;top:71.7px;" width="3.6" height="2.6" viewBox="0 0 3.6 2.6"><path d="M0.3 0.4 L1.8 2 L3.3 0.4" fill="none" stroke="#858585" stroke-width="0.8"/></svg>
<div class="t" style="left:850.5px;top:85.0px;font-size:7px;color:#555;transform:translate(-50%,-50%) scaleX(0.929);">編集</div>
<div class="a" style="left:913.4px;top:39.0px;width:1.0px;height:48.0px;background:#e0e0e0;"></div>
<svg class="a" style="left:933.6px;top:84.4px;" width="6" height="4" viewBox="0 0 6 4"><path d="M0.5 3.3 L3 0.8 L5.5 3.3" fill="none" stroke="#777" stroke-width="0.8"/></svg>
<div class="a" style="left:80.0px;top:89.0px;width:864.0px;height:47.0px;background:#e6e6e6;"></div>
<div class="a" style="left:83.0px;top:96.2px;width:58.5px;height:15.2px;background:#fff;"></div>
<div class="t" style="left:85.6px;top:104.6px;font-size:9px;color:#555;transform-origin:0 50%;transform:translateY(-50%) scaleX(0.853);">A1</div>
<svg class="a" style="left:135.5px;top:103.6px;" width="3" height="2" viewBox="0 0 3 2"><path d="M0 0 L3 0 L1.5 2 Z" fill="#777"/></svg>
<svg class="a" style="left:149.3px;top:100.8px;" width="2" height="7" viewBox="0 0 2 7"><circle cx="1" cy="1" r="0.45" fill="#999"/><circle cx="1" cy="3.3" r="0.45" fill="#999"/><circle cx="1" cy="5.6" r="0.45" fill="#999"/></svg>
<div class="a" style="left:160.0px;top:96.2px;width:61.4px;height:15.2px;background:#fff;"></div>
<svg class="a" style="left:166.2px;top:100.4px;" width="7.2" height="6.6" viewBox="0 0 7.2 6.6"><path d="M0.6 0.6 L6.6 6 M6.6 0.6 L0.6 6" stroke="#bdbdbd" stroke-width="0.9"/></svg>
<svg class="a" style="left:186.8px;top:100.6px;" width="8" height="6.4" viewBox="0 0 8 6.4"><path d="M0.6 3.4 L3 5.8 L7.4 0.6" fill="none" stroke="#bdbdbd" stroke-width="0.9"/></svg>
<div class="t" style="left:211.8px;top:103.5px;font-size:10px;color:#b8b8b8;transform:translate(-50%,-50%);font-style:italic;font-family:'Liberation Serif',serif;">fx</div>
<div class="a" style="left:224.2px;top:96.2px;width:716.8px;height:15.2px;background:#fff;"></div>
<div class="t" style="left:231.0px;top:103.9px;font-size:8.2px;color:#777;transform-origin:0 50%;transform:translateY(-50%) scaleX(1.014);">画面の拡大縮小の仕方</div>
<svg class="a" style="left:934.0px;top:101.0px;" width="6" height="5" viewBox="0 0 6 5"><path d="M0.8 1 L3 3.4 L5.2 1" fill="none" stroke="#555" stroke-width="1.1"/></svg>
<div class="a" style="left:101.4px;top:118.0px;width:155.6px;height:17.0px;background:#d4d4d4;"></div>
<svg class="a" style="left:87.6px;top:121.0px;" width="12.4" height="12.8" viewBox="0 0 12.4 12.8"><path d="M12.4 0 V12.8 H0 Z" fill="#c6c6c6"/></svg>
<div class="t" style="left:127.3px;top:126.8px;font-size:11.6px;color:#217346;transform:translate(-50%,-50%);">A</div>
<div class="t" style="left:179.0px;top:126.8px;font-size:11.6px;color:#217346;transform:translate(-50%,-50%);">B</div>
<div class="t" style="left:230.7px;top:126.8px;font-size:11.6px;color:#217346;transform:translate(-50%,-50%);">C</div>
<div class="t" style="left:282.5px;top:126.8px;font-size:11.6px;color:#444;transform:translate(-50%,-50%);">D</div>
<div class="t" style="left:334.2px;top:126.8px;font-size:11.6px;color:#444;transform:translate(-50%,-50%);">E</div>
<div class="t" style="left:385.9px;top:126.8px;font-size:11.6px;color:#444;transform:translate(-50%,-50%);">F</div>
<div class="t" style="left:437.6px;top:126.8px;font-size:11.6px;color:#444;transform:translate(-50%,-50%);">G</div>
<div class="t" style="left:489.4px;top:126.8px;font-size:11.6px;color:#444;transform:translate(-50%,-50%);">H</div>
<div class="t" style="left:541.1px;top:126.8px;font-size:11.6px;color:#444;transform:translate(-50%,-50%);">I</div>
<div class="t" style="left:592.8px;top:126.8px;font-size:11.6px;color:#444;transform:translate(-50%,-50%);">J</div>
<div class="t" style="left:644.6px;top:126.8px;font-size:11.6px;color:#444;transform:translate(-50%,-50%);">K</div>
<div class="t" style="left:696.3px;top:126.8px;font-size:11.6px;color:#444;transform:translate(-50%,-50%);">L</div>
<div class="t" style="left:748.0px;top:126.8px;font-size:11.6px;color:#444;transform:translate(-50%,-50%);">M</div>
<div class="t" style="left:799.8px;top:126.8px;font-size:11.6px;color:#444;transform:translate(-50%,-50%);">N</div>
<div class="t" style="left:851.5px;top:126.8px;font-size:11.6px;color:#444;transform:translate(-50%,-50%);">O</div>
<div class="t" style="left:903.2px;top:126.8px;font-size:11.6px;color:#444;transform:translate(-50%,-50%);">P</div>
<div class="a" style="left:152.6px;top:119.0px;width:1.0px;height:16.0px;background:#c9c9c9;"></div>
<div class="a" style="left:204.4px;top:119.0px;width:1.0px;height:16.0px;background:#c9c9c9;"></div>
<div class="a" style="left:256.1px;top:119.0px;width:1.0px;height:16.0px;background:#c9c9c9;"></div>
<div class="a" style="left:307.8px;top:119.0px;width:1.0px;height:16.0px;background:#d4d4d4;"></div>
<div class="a" style="left:359.5px;top:119.0px;width:1.0px;height:16.0px;background:#d4d4d4;"></div>
<div class="a" style="left:411.3px;top:119.0px;width:1.0px;height:16.0px;background:#d4d4d4;"></div>
<div class="a" style="left:463.0px;top:119.0px;width:1.0px;height:16.0px;background:#d4d4d4;"></div>
<div class="a" style="left:514.7px;top:119.0px;width:1.0px;height:16.0px;background:#d4d4d4;"></div>
<div class="a" style="left:566.5px;top:119.0px;width:1.0px;height:16.0px;background:#d4d4d4;"></div>
<div class="a" style="left:618.2px;top:119.0px;width:1.0px;height:16.0px;background:#d4d4d4;"></div>
<div class="a" style="left:669.9px;top:119.0px;width:1.0px;height:16.0px;background:#d4d4d4;"></div>
<div class="a" style="left:721.7px;top:119.0px;width:1.0px;height:16.0px;background:#d4d4d4;"></div>
<div class="a" style="left:773.4px;top:119.0px;width:1.0px;height:16.0px;background:#d4d4d4;"></div>
<div class="a" style="left:825.1px;top:119.0px;width:1.0px;height:16.0px;background:#d4d4d4;"></div>
<div class="a" style="left:876.8px;top:119.0px;width:1.0px;height:16.0px;background:#d4d4d4;"></div>
<div class="a" style="left:928.6px;top:119.0px;width:1.0px;height:16.0px;background:#d4d4d4;"></div>
<div class="a" style="left:80.0px;top:135.0px;width:21.4px;height:393.2px;background:#e6e6e6;"></div>
<div class="a" style="left:80.0px;top:135.0px;width:21.4px;height:18.2px;background:#d4d4d4;"></div>
<div class="a" style="left:101.4px;top:135.0px;width:831.6px;height:393.2px;background:#fff;"></div>
<div class="a" style="left:152.6px;top:135.0px;width:1.0px;height:393.2px;background:#ebebeb;"></div>
<div class="a" style="left:204.4px;top:135.0px;width:1.0px;height:393.2px;background:#ebebeb;"></div>
<div class="a" style="left:256.1px;top:135.0px;width:1.0px;height:393.2px;background:#ebebeb;"></div>
<div class="a" style="left:307.8px;top:135.0px;width:1.0px;height:393.2px;background:#ebebeb;"></div>
<div class="a" style="left:359.5px;top:135.0px;width:1.0px;height:393.2px;background:#ebebeb;"></div>
<div class="a" style="left:411.3px;top:135.0px;width:1.0px;height:393.2px;background:#ebebeb;"></div>
<div class="a" style="left:463.0px;top:135.0px;width:1.0px;height:393.2px;background:#ebebeb;"></div>
<div class="a" style="left:514.7px;top:135.0px;width:1.0px;height:393.2px;background:#ebebeb;"></div>
<div class="a" style="left:566.5px;top:135.0px;width:1.0px;height:393.2px;background:#ebebeb;"></div>
<div class="a" style="left:618.2px;top:135.0px;width:1.0px;height:393.2px;background:#ebebeb;"></div>
<div class="a" style="left:669.9px;top:135.0px;width:1.0px;height:393.2px;background:#ebebeb;"></div>
<div class="a" style="left:721.7px;top:135.0px;width:1.0px;height:393.2px;background:#ebebeb;"></div>
<div class="a" style="left:773.4px;top:135.0px;width:1.0px;height:393.2px;background:#ebebeb;"></div>
<div class="a" style="left:825.1px;top:135.0px;width:1.0px;height:393.2px;background:#ebebeb;"></div>
<div class="a" style="left:876.8px;top:135.0px;width:1.0px;height:393.2px;background:#ebebeb;"></div>
<div class="a" style="left:928.6px;top:135.0px;width:1.0px;height:393.2px;background:#ebebeb;"></div>
<div class="t" style="left:90.6px;top:144.4px;font-size:11.6px;color:#217346;transform:translate(-50%,-50%);">1</div>
<div class="a" style="left:101.4px;top:152.7px;width:831.6px;height:1.0px;background:#f0f0f0;"></div>
<div class="a" style="left:82.0px;top:152.7px;width:19.4px;height:1.0px;background:#d8d8d8;"></div>
<div class="t" style="left:90.6px;top:162.4px;font-size:11.6px;color:#444;transform:translate(-50%,-50%);">2</div>
<div class="a" style="left:101.4px;top:170.7px;width:831.6px;height:1.0px;background:#f0f0f0;"></div>
<div class="a" style="left:82.0px;top:170.7px;width:19.4px;height:1.0px;background:#d8d8d8;"></div>
<div class="t" style="left:90.6px;top:180.4px;font-size:11.6px;color:#444;transform:translate(-50%,-50%);">3</div>
<div class="a" style="left:101.4px;top:188.7px;width:831.6px;height:1.0px;background:#f0f0f0;"></div>
<div class="a" style="left:82.0px;top:188.7px;width:19.4px;height:1.0px;background:#d8d8d8;"></div>
<div class="t" style="left:90.6px;top:198.4px;font-size:11.6px;color:#444;transform:translate(-50%,-50%);">4</div>
<div class="a" style="left:101.4px;top:206.7px;width:831.6px;height:1.0px;background:#f0f0f0;"></div>
<div class="a" style="left:82.0px;top:206.7px;width:19.4px;height:1.0px;background:#d8d8d8;"></div>
<div class="t" style="left:90.6px;top:216.4px;font-size:11.6px;color:#444;transform:translate(-50%,-50%);">5</div>
<div class="a" style="left:101.4px;top:224.7px;width:831.6px;height:1.0px;background:#f0f0f0;"></div>
<div class="a" style="left:82.0px;top:224.7px;width:19.4px;height:1.0px;background:#d8d8d8;"></div>
<div class="t" style="left:90.6px;top:234.4px;font-size:11.6px;color:#444;transform:translate(-50%,-50%);">6</div>
<div class="a" style="left:101.4px;top:242.7px;width:831.6px;height:1.0px;background:#f0f0f0;"></div>
<div class="a" style="left:82.0px;top:242.7px;width:19.4px;height:1.0px;background:#d8d8d8;"></div>
<div class="t" style="left:90.6px;top:252.4px;font-size:11.6px;color:#444;transform:translate(-50%,-50%);">7</div>
<div class="a" style="left:101.4px;top:260.7px;width:831.6px;height:1.0px;background:#f0f0f0;"></div>
<div class="a" style="left:82.0px;top:260.7px;width:19.4px;height:1.0px;background:#d8d8d8;"></div>
<div class="t" style="left:90.6px;top:270.4px;font-size:11.6px;color:#444;transform:translate(-50%,-50%);">8</div>
<div class="a" style="left:101.4px;top:278.7px;width:831.6px;height:1.0px;background:#f0f0f0;"></div>
<div class="a" style="left:82.0px;top:278.7px;width:19.4px;height:1.0px;background:#d8d8d8;"></div>
<div class="t" style="left:90.6px;top:288.4px;font-size:11.6px;color:#444;transform:translate(-50%,-50%);">9</div>
<div class="a" style="left:101.4px;top:296.7px;width:831.6px;height:1.0px;background:#f0f0f0;"></div>
<div class="a" style="left:82.0px;top:296.7px;width:19.4px;height:1.0px;background:#d8d8d8;"></div>
<div class="t" style="left:90.6px;top:306.4px;font-size:11.6px;color:#444;transform:translate(-50%,-50%);">10</div>
<div class="a" style="left:101.4px;top:314.7px;width:831.6px;height:1.0px;background:#f0f0f0;"></div>
<div class="a" style="left:82.0px;top:314.7px;width:19.4px;height:1.0px;background:#d8d8d8;"></div>
<div class="t" style="left:90.6px;top:324.4px;font-size:11.6px;color:#444;transform:translate(-50%,-50%);">11</div>
<div class="a" style="left:101.4px;top:332.7px;width:831.6px;height:1.0px;background:#f0f0f0;"></div>
<div class="a" style="left:82.0px;top:332.7px;width:19.4px;height:1.0px;background:#d8d8d8;"></div>
<div class="t" style="left:90.6px;top:342.4px;font-size:11.6px;color:#444;transform:translate(-50%,-50%);">12</div>
<div class="a" style="left:101.4px;top:350.7px;width:831.6px;height:1.0px;background:#f0f0f0;"></div>
<div class="a" style="left:82.0px;top:350.7px;width:19.4px;height:1.0px;background:#d8d8d8;"></div>
<div class="t" style="left:90.6px;top:360.4px;font-size:11.6px;color:#444;transform:translate(-50%,-50%);">13</div>
<div class="a" style="left:101.4px;top:368.7px;width:831.6px;height:1.0px;background:#f0f0f0;"></div>
<div class="a" style="left:82.0px;top:368.7px;width:19.4px;height:1.0px;background:#d8d8d8;"></div>
<div class="t" style="left:90.6px;top:378.4px;font-size:11.6px;color:#444;transform:translate(-50%,-50%);">14</div>
<div class="a" style="left:101.4px;top:386.7px;width:831.6px;height:1.0px;background:#f0f0f0;"></div>
<div class="a" style="left:82.0px;top:386.7px;width:19.4px;height:1.0px;background:#d8d8d8;"></div>
<div class="t" style="left:90.6px;top:396.4px;font-size:11.6px;color:#444;transform:translate(-50%,-50%);">15</div>
<div class="a" style="left:101.4px;top:404.7px;width:831.6px;height:1.0px;background:#f0f0f0;"></div>
<div class="a" style="left:82.0px;top:404.7px;width:19.4px;height:1.0px;background:#d8d8d8;"></div>
<div class="t" style="left:90.6px;top:414.4px;font-size:11.6px;color:#444;transform:translate(-50%,-50%);">16</div>
<div class="a" style="left:101.4px;top:422.7px;width:831.6px;height:1.0px;background:#f0f0f0;"></div>
<div class="a" style="left:82.0px;top:422.7px;width:19.4px;height:1.0px;background:#d8d8d8;"></div>
<div class="t" style="left:90.6px;top:432.4px;font-size:11.6px;color:#444;transform:translate(-50%,-50%);">17</div>
<div class="a" style="left:101.4px;top:440.7px;width:831.6px;height:1.0px;background:#f0f0f0;"></div>
<div class="a" style="left:82.0px;top:440.7px;width:19.4px;height:1.0px;background:#d8d8d8;"></div>
<div class="t" style="left:90.6px;top:450.4px;font-size:11.6px;color:#444;transform:translate(-50%,-50%);">18</div>
<div class="a" style="left:101.4px;top:458.7px;width:831.6px;height:1.0px;background:#f0f0f0;"></div>
<div class="a" style="left:82.0px;top:458.7px;width:19.4px;height:1.0px;background:#d8d8d8;"></div>
<div class="t" style="left:90.6px;top:468.4px;font-size:11.6px;color:#444;transform:translate(-50%,-50%);">19</div>
<div class="a" style="left:101.4px;top:476.7px;width:831.6px;height:1.0px;background:#f0f0f0;"></div>
<div class="a" style="left:82.0px;top:476.7px;width:19.4px;height:1.0px;background:#d8d8d8;"></div>
<div class="t" style="left:90.6px;top:486.4px;font-size:11.6px;color:#444;transform:translate(-50%,-50%);">20</div>
<div class="a" style="left:101.4px;top:494.7px;width:831.6px;height:1.0px;background:#f0f0f0;"></div>
<div class="a" style="left:82.0px;top:494.7px;width:19.4px;height:1.0px;background:#d8d8d8;"></div>
<div class="t" style="left:90.6px;top:504.4px;font-size:11.6px;color:#444;transform:translate(-50%,-50%);">21</div>
<div class="a" style="left:101.4px;top:512.7px;width:831.6px;height:1.0px;background:#f0f0f0;"></div>
<div class="a" style="left:82.0px;top:512.7px;width:19.4px;height:1.0px;background:#d8d8d8;"></div>
<div class="t" style="left:90.6px;top:522.4px;font-size:11.6px;color:#444;transform:translate(-50%,-50%);">22</div>
<div class="a" style="left:101.2px;top:134.6px;width:156.2px;height:19.2px;background:#fff;border:1px solid #4f8a6a;"></div>
<div class="a" style="left:255.8px;top:152.4px;width:2.4px;height:2.4px;background:#217346;"></div>
<div class="t" style="left:179.0px;top:144.1px;font-size:10.6px;color:#555;transform:translate(-50%,-50%) scaleX(1.045);">画面の拡大縮小の仕方</div>
<div class="a" style="left:933.0px;top:118.0px;width:11.0px;height:410.2px;background:#e6e6e6;"></div>
<div class="a" style="left:933.4px;top:118.5px;width:9.0px;height:9.0px;background:#fff;border:1px solid #dadada;"></div>
<svg class="a" style="left:936.2px;top:121.6px;" width="3.6" height="2.6" viewBox="0 0 3.6 2.6"><path d="M0 2.6 L1.8 0 L3.6 2.6 Z" fill="#666"/></svg>
<div class="a" style="left:933.4px;top:127.5px;width:9.0px;height:373.0px;background:#fff;border:1px solid #dcdcdc;"></div>
<div class="a" style="left:933.4px;top:500.5px;width:9.0px;height:17.9px;background:#c9c9c9;"></div>
<div class="a" style="left:933.4px;top:518.4px;width:9.0px;height:9.2px;background:#fff;border:1px solid #dadada;"></div>
<svg class="a" style="left:936.2px;top:521.8px;" width="3.6" height="2.6" viewBox="0 0 3.6 2.6"><path d="M0 0 L1.8 2.6 L3.6 0 Z" fill="#666"/></svg>
<div class="a" style="left:80.0px;top:528.2px;width:864.0px;height:12.2px;background:#e6e6e6;"></div>
<div class="a" style="left:80.0px;top:528.2px;width:864.0px;height:0.8px;background:#cfcfcf;"></div>
<svg class="a" style="left:91.6px;top:532.4px;" width="3" height="4" viewBox="0 0 3 4"><path d="M2.6 0.4 L0.6 2 L2.6 3.6" fill="none" stroke="#c4c4c4" stroke-width="0.7"/></svg>
<svg class="a" style="left:103.4px;top:532.4px;" width="3" height="4" viewBox="0 0 3 4"><path d="M0.4 0.4 L2.4 2 L0.4 3.6" fill="none" stroke="#c4c4c4" stroke-width="0.7"/></svg>
<div class="a" style="left:121.7px;top:528.2px;width:38.1px;height:11.0px;background:#fff;"></div>
<div class="a" style="left:121.7px;top:538.6px;width:38.1px;height:1.4px;background:#217346;"></div>
<div class="t" style="left:140.6px;top:533.6px;font-size:7.6px;color:#217346;transform:translate(-50%,-50%) scaleX(1.055);">Sheet1</div>
<svg class="a" style="left:172.4px;top:530.0px;" width="8.6" height="8.6" viewBox="0 0 8.6 8.6"><circle cx="4.3" cy="4.3" r="3.8" fill="none" stroke="#8a8a8a" stroke-width="0.7"/><path d="M4.3 2.3 V6.3 M2.3 4.3 H6.3" stroke="#777" stroke-width="0.7"/></svg>
<svg class="a" style="left:596.0px;top:531.0px;" width="2" height="7" viewBox="0 0 2 7"><circle cx="1" cy="1" r="0.5" fill="#aaa"/><circle cx="1" cy="3.5" r="0.5" fill="#aaa"/><circle cx="1" cy="6" r="0.5" fill="#aaa"/></svg>
<div class="a" style="left:603.7px;top:530.2px;width:9.1px;height:8.4px;background:#fff;border:1px solid #dadada;"></div>
<svg class="a" style="left:606.8px;top:532.6px;" width="2.6" height="3.6" viewBox="0 0 2.6 3.6"><path d="M2.6 0 L0 1.8 L2.6 3.6 Z" fill="#555"/></svg>
<div class="a" style="left:612.8px;top:530.2px;width:290.2px;height:8.4px;background:#fff;border:1px solid #dcdcdc;"></div>
<div class="a" style="left:903.0px;top:530.2px;width:20.4px;height:8.4px;background:#cdcdcd;"></div>
<div class="a" style="left:923.4px;top:530.2px;width:8.6px;height:8.4px;background:#fff;border:1px solid #dadada;"></div>
<svg class="a" style="left:926.6px;top:532.6px;" width="2.6" height="3.6" viewBox="0 0 2.6 3.6"><path d="M0 0 L2.6 1.8 L0 3.6 Z" fill="#555"/></svg>
<div class="a" style="left:80.0px;top:540.4px;width:864.0px;height:12.8px;background:#f3f3f3;"></div>
<div class="t" style="left:84.0px;top:546.8px;font-size:7px;color:#444;transform-origin:0 50%;transform:translateY(-50%) scaleX(1.000);">準備完了</div>
<svg class="a" style="left:721.2px;top:543.0px;" width="8" height="7.4" viewBox="0 0 8 7.4"><rect x="0.3" y="0.3" width="6.4" height="4.6" fill="#555"/><path d="M2 6.6 H5" stroke="#555" stroke-width="0.8"/><circle cx="6.2" cy="5.6" r="1.5" fill="#555" stroke="#f3f3f3" stroke-width="0.4"/></svg>
<div class="t" style="left:731.4px;top:546.9px;font-size:7px;color:#444;transform-origin:0 50%;transform:translateY(-50%) scaleX(0.971);">表示設定</div>
<div class="a" style="left:768.7px;top:540.8px;width:22.9px;height:12.4px;background:#c8c8c8;"></div>
<svg class="a" style="left:775.8px;top:543.0px;" width="8.4" height="7.6" viewBox="0 0 8.4 7.6"><rect x="0.4" y="0.4" width="7.6" height="6.8" fill="none" stroke="#8a8a8a" stroke-width="0.7"/><path d="M0.4 2.6 H8 M0.4 4.9 H8 M3 0.4 V7.2 M5.5 0.4 V7.2" stroke="#8a8a8a" stroke-width="0.5"/></svg>
<svg class="a" style="left:798.7px;top:543.0px;" width="8.4" height="7.6" viewBox="0 0 8.4 7.6"><rect x="0.4" y="0.4" width="7.6" height="6.8" fill="none" stroke="#9a9a9a" stroke-width="0.7"/><rect x="2.2" y="1.6" width="4" height="5.6" fill="none" stroke="#9a9a9a" stroke-width="0.5"/></svg>
<svg class="a" style="left:821.8px;top:542.8px;" width="8.4" height="7.6" viewBox="0 0 8.4 7.6"><rect x="0.4" y="0.4" width="7.6" height="6.8" fill="none" stroke="#9a9a9a" stroke-width="0.7"/><path d="M0.4 3.4 H5.2 V0.4 M5.2 3.4 H8" stroke="#9a9a9a" stroke-width="0.5" fill="none"/></svg>
<div class="a" style="left:841.4px;top:546.4px;width:3.6px;height:0.6px;background:#9a9a9a;"></div>
<div class="a" style="left:849.0px;top:546.4px;width:55.6px;height:0.6px;background:#b8b8b8;"></div>
<div class="a" style="left:876.6px;top:545.0px;width:0.6px;height:3.4px;background:#b8b8b8;"></div>
<div class="a" style="left:908.4px;top:546.4px;width:4.6px;height:0.6px;background:#9a9a9a;"></div>
<div class="a" style="left:910.4px;top:544.4px;width:0.6px;height:4.6px;background:#9a9a9a;"></div>
<div class="a" style="left:878.6px;top:543.2px;width:3.0px;height:8.0px;background:#8c1a14;"></div>
<div class="t" style="left:920.0px;top:546.8px;font-size:7.4px;color:#555;transform-origin:0 50%;transform:translateY(-50%) scaleX(1.148);font-family:'Liberation Serif',serif;">130%</div>
<div class="a" style="left:80.0px;top:553.2px;width:864.0px;height:22.8px;background:#1c2d3b;"></div>
<svg class="a" style="left:90.0px;top:560.4px;" width="8" height="8" viewBox="0 0 8 8"><path d="M0 1.1 L3.5 0.6 V3.8 H0 Z M4.1 0.5 L8 0 V3.8 H4.1 Z M0 4.3 H3.5 V7.5 L0 7 Z M4.1 4.3 H8 V8 L4.1 7.5 Z" fill="#fff"/></svg>
<div class="a" style="left:107.7px;top:553.2px;width:197.3px;height:22.8px;background:#f1f1f1;"></div>
<svg class="a" style="left:114.0px;top:559.8px;" width="8" height="8.6" viewBox="0 0 8 8.6"><circle cx="4.9" cy="3.2" r="2.6" fill="none" stroke="#333" stroke-width="0.8"/><path d="M3 5.2 L0.6 8" stroke="#333" stroke-width="0.9"/></svg>
<div class="t" style="left:130.3px;top:565.2px;font-size:8px;color:#444;transform-origin:0 50%;transform:translateY(-50%) scaleX(0.920);">ここに入力して検索</div>
<svg class="a" style="left:314.0px;top:560.0px;" width="10" height="10" viewBox="0 0 10 10"><circle cx="5" cy="5" r="3.6" fill="none" stroke="#fff" stroke-width="1.2"/></svg>
<svg class="a" style="left:341.0px;top:560.4px;" width="11" height="9" viewBox="0 0 11 9"><rect x="2.4" y="2" width="5.2" height="4.6" fill="none" stroke="#d8dde2" stroke-width="0.8"/><path d="M0.6 1.4 V7.4 M9.6 1.4 V3 M9.6 4 V5 M9.6 6 V7.4 M2.4 0.6 H7.6 M2.4 8.2 H7.6" stroke="#d8dde2" stroke-width="0.8"/></svg>
<svg class="a" style="left:368.4px;top:558.8px;" width="13" height="11.4" viewBox="0 0 13 11.4"><path d="M0.4 1 H5 L6 2.2 H12.4 V10.6 H0.4 Z" fill="#f6c445"/><rect x="0.4" y="3.8" width="12" height="6.8" fill="#fbdc7a"/><rect x="3.4" y="6.4" width="6.2" height="4.2" fill="#3a8ee6"/><rect x="4.6" y="7.6" width="3.8" height="1.4" fill="#fbdc7a"/></svg>
<svg class="a" style="left:394.5px;top:558.8px;" width="13" height="11.4" viewBox="0 0 13 11.4"><rect x="0" y="0.4" width="12.8" height="10.8" fill="#1669c9"/><path d="M0 11.2 V7 L3.6 3.6 L7.4 7.4 L9 6 L12.8 9.4 V11.2 Z" fill="#0b3f86"/><circle cx="9.6" cy="3" r="1.1" fill="#e8f2ff"/></svg>
<svg class="a" style="left:420.0px;top:557.8px;" width="13.4" height="13" viewBox="0 0 13.4 13"><path d="M4.2 3.6 V2.2 Q4.2 0.6 6.7 0.6 Q9.2 0.6 9.2 2.2 V3.6" fill="none" stroke="#f2f2f2" stroke-width="0.9"/><rect x="0.6" y="3.4" width="12.2" height="9" fill="#f2f2f2"/><rect x="4.6" y="5.8" width="1.8" height="1.8" fill="#e74c3c"/><rect x="7" y="5.8" width="1.8" height="1.8" fill="#7cbb42"/><rect x="4.6" y="8.2" width="1.8" height="1.8" fill="#2d9bf0"/><rect x="7" y="8.2" width="1.8" height="1.8" fill="#f6c445"/></svg>
<svg class="a" style="left:445.8px;top:557.8px;" width="14.2" height="14" viewBox="0 0 14.2 14"><circle cx="7" cy="7" r="6.6" fill="#1b74d8"/><path d="M1 9 Q2 13.4 7.6 13.4 Q11 13.2 12.6 10.4 Q9.4 12 7.2 10 Q5.4 8 7.4 6.2 Q4 5 1 9 Z" fill="#35c1a4"/><path d="M7.2 4.6 Q10.6 4.4 11 7.6 Q10 6.2 7.4 6.2 Q5.2 6.8 5.8 9.2 Q4.2 6 7.2 4.6 Z" fill="#0b3f86"/></svg>
<svg class="a" style="left:472.5px;top:558.4px;" width="13" height="12" viewBox="0 0 13 12"><path d="M3.6 0.6 L12.4 1.6 L9.6 11 L0.6 9.6 Z" fill="#c9d6e4"/><path d="M4.6 2.2 L11 3 L8.8 9.8 L2.4 8.8 Z" fill="#8fb1cf"/><path d="M3.6 0.6 L12.4 1.6 L12 2.8 L3.2 1.8 Z" fill="#5b7c9a"/></svg>
<svg class="a" style="left:498.0px;top:558.0px;" width="13.4" height="13.4" viewBox="0 0 13.4 13.4"><circle cx="6.7" cy="6.7" r="6.5" fill="#fdf000"/></svg>
<div class="a" style="left:495.3px;top:574.6px;width:19.6px;height:1.4px;background:#8fb8dd;"></div>
<svg class="a" style="left:524.5px;top:558.4px;" width="12" height="12" viewBox="0 0 12 12"><path d="M5.6 0.4 L7 4 L11 3.2 L8.2 6 L10.4 9.8 L6.4 7.8 L3 11 L3.8 6.8 L0.4 4.6 L4.4 4.4 Z" fill="#8da9d6"/><path d="M6 4.6 L10.4 9 L8.4 9 L9.4 11.2 L8.4 11.6 L7.4 9.4 L6 10.8 Z" fill="#f4f4f4" stroke="#333" stroke-width="0.3"/></svg>
<svg class="a" style="left:549.2px;top:558.8px;" width="14.4" height="12" viewBox="0 0 14.4 12"><path d="M0.4 4.6 L7.2 0.4 L14 4.6 V11.4 H0.4 Z" fill="#0f6fc6"/><path d="M1.6 4.8 L7.2 8.6 L12.8 4.8 V3.4 H1.6 Z" fill="#e9f2fb"/><path d="M0.4 5 L7.2 9.6 L14 5 V11.4 H0.4 Z" fill="#2a93e8"/></svg>
<svg class="a" style="left:575.4px;top:558.2px;" width="13.4" height="13" viewBox="0 0 13.4 13"><rect x="0" y="0" width="13.4" height="13" rx="1.4" fill="#263442"/><path d="M4 3 L7 3 L10.4 6.5 L7 10 L4 10 L7.4 6.5 Z" fill="#49e0c4"/></svg>
<div class="a" style="left:573.0px;top:574.6px;width:18.0px;height:1.4px;background:#8fb8dd;"></div>
<div class="a" style="left:595.7px;top:553.2px;width:24.1px;height:22.8px;background:#3f4e5e;"></div>
<svg class="a" style="left:600.8px;top:558.4px;" width="14" height="12.4" viewBox="0 0 14 12.4"><rect x="3.6" y="0.4" width="10" height="11.6" rx="0.8" fill="#21a366"/><rect x="8.6" y="0.4" width="5" height="5.8" fill="#33c481"/><rect x="8.6" y="6.2" width="5" height="5.8" fill="#107c41"/><rect x="0" y="2.6" width="7.6" height="7.4" rx="0.6" fill="#107c41"/><path d="M2.2 4.4 L5.4 8.2 M5.4 4.4 L2.2 8.2" stroke="#fff" stroke-width="0.9"/></svg>
<div class="a" style="left:595.7px;top:574.6px;width:24.1px;height:1.4px;background:#8fb8dd;"></div>
<svg class="a" style="left:626.9px;top:558.4px;" width="13.4" height="12.6" viewBox="0 0 13.4 12.6"><rect x="0.4" y="0.6" width="9.6" height="8" rx="1" fill="#2aa6e0"/><path d="M10 3.4 L13 1.6 V7.6 L10 5.8 Z" fill="#2aa6e0"/><circle cx="5.2" cy="4.6" r="2" fill="#e0242c"/><path d="M5.2 8.6 V11 M2.6 11.6 H7.8" stroke="#2aa6e0" stroke-width="0.9"/></svg>
<div class="a" style="left:624.0px;top:574.6px;width:19.0px;height:1.4px;background:#8fb8dd;"></div>
<svg class="a" style="left:661.7px;top:559.0px;" width="13" height="10.6" viewBox="0 0 13 10.6"><circle cx="8.6" cy="3.8" r="3" fill="#f8b62b"/><path d="M2.6 10 Q0.4 10 0.4 7.8 Q0.4 5.8 2.6 5.8 Q3.2 3.4 5.8 3.4 Q8.2 3.4 8.8 5.6 Q12.4 5.4 12.4 7.8 Q12.4 10 10.2 10 Z" fill="#e9eef4"/></svg>
<div class="t" style="left:679.5px;top:565.5px;font-size:7.6px;color:#e6e9ec;transform-origin:0 50%;transform:translateY(-50%) scaleX(1.002);">27°C</div>
<svg class="a" style="left:709.4px;top:562.4px;" width="6.4" height="4.4" viewBox="0 0 6.4 4.4"><path d="M0.5 3.8 L3.2 0.8 L5.9 3.8" fill="none" stroke="#e6e9ec" stroke-width="0.8"/></svg>
<svg class="a" style="left:728.0px;top:560.4px;" width="64" height="9" viewBox="0 0 64 9"><g fill="#9aa4ae" opacity="0.7"><rect x="2" y="3" width="6" height="4"/><rect x="17" y="2" width="5" height="6"/><rect x="31" y="3" width="8" height="4"/><rect x="47" y="2.6" width="6" height="5"/></g><circle cx="58" cy="6" r="2.2" fill="#d8382c"/></svg>
<svg class="a" style="left:800.3px;top:560.6px;" width="9.4" height="8" viewBox="0 0 9.4 8"><rect x="0.4" y="0.4" width="7.6" height="5.2" fill="none" stroke="#dfe3e7" stroke-width="0.7"/><path d="M2.4 7.2 H6" stroke="#dfe3e7" stroke-width="0.7"/></svg>
<svg class="a" style="left:820.6px;top:560.4px;" width="8" height="8.4" viewBox="0 0 8 8.4"><path d="M0.8 7.8 Q1.4 4.2 4 4.4 Q6 4.8 5.2 2.2 Q4.8 0.8 6.8 0.6" fill="none" stroke="#dfe3e7" stroke-width="0.9"/><circle cx="4.2" cy="4.6" r="1" fill="#dfe3e7"/></svg>
<div class="t" style="left:842.8px;top:565.2px;font-size:9px;color:#f0f2f4;transform:translate(-50%,-50%);font-family:'Liberation Serif',serif;font-weight:bold;transform:translate(-50%,-50%) scaleX(0.7);">A</div>
<svg class="a" style="left:854.4px;top:560.2px;" width="9" height="9" viewBox="0 0 9 9"><circle cx="4" cy="4" r="3.6" fill="#1f7be0"/><circle cx="6.4" cy="6.2" r="2" fill="#e8442e"/><circle cx="7" cy="6.6" r="0.9" fill="#f6c445"/></svg>
<div class="t" style="left:892.0px;top:559.4px;font-size:6.8px;color:#8fa0ae;transform:translate(-50%,-50%);">9:22</div>
<div class="t" style="left:891.8px;top:570.2px;font-size:7px;color:#e8ebee;transform:translate(-50%,-50%) scaleX(1.013);">2021/07/08</div>
<svg class="a" style="left:920.4px;top:560.2px;" width="9.6" height="9.2" viewBox="0 0 9.6 9.2"><path d="M0.5 0.5 H9 V7 H3.6 L2 8.6 V7 H0.5 Z" fill="#f2f4f6"/><path d="M2 2.4 H7.4 M2 3.8 H7.4 M2 5.2 H5.6" stroke="#1b2a3b" stroke-width="0.5"/></svg>
<div class="t" style="left:720.3px;top:563.0px;font-size:12.6px;color:rgba(255,255,255,0.88);transform-origin:0 50%;transform:translateY(-50%) scaleX(0.995);text-shadow:0 0 1.5px rgba(0,0,0,0.9),0.6px 0.6px 1px rgba(0,0,0,0.8);">© 2021 saym.</div>
<div class="a" style="left:148.2px;top:337.5px;width:731.8px;height:132.9px;background:#ec1c24;"></div>
<div class="a" style="left:155.0px;top:344.0px;width:717.0px;height:120.0px;background:#f3f3f3;"></div>
<div class="a" style="left:155.0px;top:344.0px;width:717.0px;height:12.0px;background:linear-gradient(180deg,#eeeeee 0%,#e9e9e9 40%,#d6d6d6 62%,#efefef 85%,#f6f6f6 100%);"></div>
<div class="a" style="left:155.0px;top:356.0px;width:717.0px;height:96.0px;background:linear-gradient(180deg,#f6f6f6 0%,#f4f4f4 60%,#f5f5f5 100%);"></div>
<div class="a" style="left:155.0px;top:451.4px;width:717.0px;height:12.6px;background:#1c2b3e;"></div>
<div class="a" style="left:155.0px;top:449.8px;width:717.0px;height:2.2px;background:linear-gradient(180deg,#f4f4f4,#8c95a0);"></div>
<div class="a" style="left:155.0px;top:371.7px;width:3.6px;height:53.3px;background:linear-gradient(90deg,#cfcfcf,#f0f0f0);"></div>
<div class="a" style="left:856.0px;top:453.0px;width:2.0px;height:11.0px;background:#5b6a7c;"></div>
<div class="a" style="left:866.0px;top:453.0px;width:1.6px;height:11.0px;background:#46566a;"></div>
<div class="a" style="left:225.6px;top:398.6px;width:27.6px;height:6.4px;background:linear-gradient(180deg,#9a9a9a,#6e6e6e);filter:blur(0.8px);box-shadow:0 0 2px 2px #fbfbfb;"></div>
<div class="a" style="left:274.0px;top:401.4px;width:356.0px;height:3.0px;background:#9d9d9d;filter:blur(0.8px);box-shadow:0 0 1.5px 1.5px #fafafa;"></div>
<div class="a" style="left:444.4px;top:377.4px;width:16.6px;height:49.2px;background:#5c5c5c;filter:blur(0.8px);box-shadow:0 0 2px 2px #fbfbfb;"></div>
<div class="a" style="left:651.0px;top:400.9px;width:27.8px;height:3.0px;background:#777;filter:blur(0.8px);"></div>
<div class="a" style="left:663.3px;top:386.0px;width:3.0px;height:32.6px;background:#777;filter:blur(0.8px);"></div>
<div class="t" style="left:785.3px;top:406.2px;font-size:56.5px;color:#5a5a5a;transform:translate(-50%,-50%) scaleX(0.865);filter:blur(0.9px);">100%</div>
<div class="a" style="left:873.3px;top:523.3px;width:8.1px;height:11.1px;background:#fff;border:1px solid #cfcfcf;"></div>
<svg class="a" style="left:874.0px;top:525.0px;" width="7" height="8" viewBox="0 0 7 8"><path d="M1 7 L4 1 M4 1 L5.6 6 M4.6 6.4 H6.2" stroke="#8a8a8a" stroke-width="0.6" fill="none"/></svg>
<div class="a" style="left:860.0px;top:529.8px;width:8.0px;height:4.2px;background:#f4f4f4;border:1px solid #d6d6d6;"></div>
<svg class="a" style="left:426.0px;top:296.0px;" width="54" height="88" viewBox="0 0 54 88"><path d="M14.6 1.8 H39.8 V41.5 H51 L27.4 85 L2.8 41.5 H14.6 Z" fill="#fe0000"/></svg>
<svg class="a" style="left:814.0px;top:460.0px;" width="64" height="78" viewBox="0 0 64 78"><path d="M4.8 18.3 L24.4 4.6 L45 33 L54 27.6 L59.6 74 L16.6 53.2 L26 47.3 Z" fill="#fe0000"/></svg>
<svg class="a" style="left:868.0px;top:535.0px;" width="26" height="24" viewBox="0 0 26 24"><circle cx="11.2" cy="12.2" r="7.3" fill="rgba(238,70,58,0.62)"/></svg>
<svg class="a" style="left:830.0px;top:531.0px;" width="92" height="30" viewBox="0 0 92 30"><rect x="4.35" y="4.95" width="83.4" height="21.6" rx="10.8" fill="none" stroke="#f20a0e" stroke-width="3.9"/></svg>
<svg class="a" style="left:879.6px;top:548.6px;" width="8" height="10" viewBox="0 0 8 10"><path d="M0.5 0.5 V8 L2.4 6.2 L3.8 9.2 L5 8.6 L3.6 5.8 H6.2 Z" fill="#fff" stroke="#222" stroke-width="0.5"/></svg>
<div class="a" style="left:0.0px;top:0.0px;width:80.0px;height:576.0px;background:#000;"></div>
<div class="a" style="left:944.0px;top:0.0px;width:80.0px;height:576.0px;background:#000;"></div>
</div></body></html>
